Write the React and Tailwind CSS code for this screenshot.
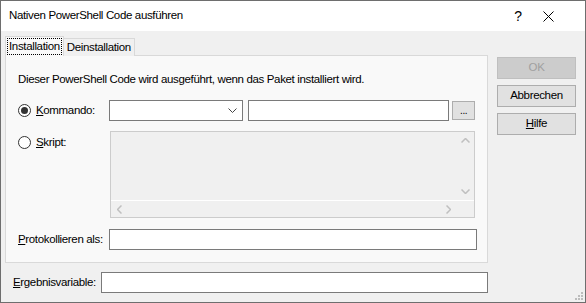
import React from "react"

const font = { fontFamily: '"Liberation Sans", Arial, sans-serif', letterSpacing: "-0.35px" }

function Radio({ checked }) {
  return (
    <span className="w-[13px] h-[13px] rounded-full border border-[#333] bg-white flex items-center justify-center shrink-0">
      {checked && <span className="w-[7px] h-[7px] rounded-full bg-[#333]" />}
    </span>
  )
}

function Field({ className = "" }) {
  return <div className={`h-[21px] bg-white border border-[#7a7a7a] shrink-0 ${className}`} />
}

function Btn({ children, disabled }) {
  return (
    <div
      className={`w-[79px] h-[22px] flex items-center justify-center border ${
        disabled ? "border-[#bfbfbf] bg-[#cccccc] text-[#a0a0a0]" : "border-[#adadad] bg-[#e1e1e1] text-black"
      }`}
    >
      {children}
    </div>
  )
}

export default function App() {
  return (
    <div className="w-[586px] h-[303px] flex flex-col border border-[#6e6e6e] text-[11.5px] text-black overflow-hidden whitespace-nowrap" style={font}>
      {/* title bar */}
      <div className="h-[30px] bg-white flex items-center shrink-0">
        <span className="ml-[8px] flex-1">Nativen PowerShell Code ausführen</span>
        <span className="w-[20px] text-center text-[14px] mr-[15px]">?</span>
        <svg width="11" height="11" viewBox="0 0 11 11" className="mr-[31px]">
          <path d="M0.5 0.5L10.5 10.5M10.5 0.5L0.5 10.5" stroke="#000" strokeWidth="1" />
        </svg>
      </div>

      {/* body */}
      <div className="flex-1 bg-[#f0f0f0] flex flex-col relative">
        <div className="flex">
          {/* tab control */}
          <div className="ml-[4px] mt-[5px] w-[483px] flex flex-col">
            <div className="flex items-end h-[20px] relative z-10">
              <div className="h-[20px] bg-[#f9f9f9] border border-b-0 border-[#d9d9d9] flex items-center px-px">
                <span className="border border-dotted border-black px-[1px] leading-[15px]">Installation</span>
              </div>
              <div className="h-[18px] bg-[#f0f0f0] border border-l-0 border-b-0 border-[#d9d9d9] flex items-center px-[3px]">
                Deinstallation
              </div>
            </div>
            <div className="-mt-px h-[208px] border border-[#d9d9d9] bg-[#f9f9f9] flex flex-col px-[12px]">
              <div className="mt-[15px] leading-[16px]">Dieser PowerShell Code wird ausgeführt, wenn das Paket installiert wird.</div>

              <div className="mt-[13px] flex items-center">
                <Radio checked />
                <span className="ml-[5px] w-[74px]"><u>K</u>ommando:</span>
                <div className="h-[21px] w-[135px] bg-white border border-[#7a7a7a] flex items-center justify-end pr-[5px]">
                  <svg width="9" height="5" viewBox="0 0 9 5">
                    <path d="M0.5 0.5L4.5 4.5L8.5 0.5" stroke="#444" fill="none" />
                  </svg>
                </div>
                <Field className="ml-[5px] w-[201px]" />
                <div className="ml-[3px] w-[23px] h-[19px] bg-[#e1e1e1] border border-[#adadad] flex items-end justify-center pb-[3px] leading-none text-[10px]">...</div>
              </div>

              <div className="mt-[10px] flex items-start">
                <div className="flex items-center mt-[3px]">
                  <Radio />
                  <span className="ml-[5px] w-[74px]"><u>S</u>kript:</span>
                </div>
                <div className="w-[368px] h-[87px] border border-[#cccccc] bg-[#f0f0f0] flex flex-col">
                  <div className="flex-1 flex">
                    <div className="flex-1" />
                    <div className="w-[17px] flex flex-col items-center justify-between py-[6px]">
                      <svg width="9" height="5" viewBox="0 0 9 5">
                        <path d="M0.5 4.5L4.5 0.5L8.5 4.5" stroke="#bfbfbf" strokeWidth="1.5" fill="none" />
                      </svg>
                      <svg width="9" height="5" viewBox="0 0 9 5">
                        <path d="M0.5 0.5L4.5 4.5L8.5 0.5" stroke="#bfbfbf" strokeWidth="1.5" fill="none" />
                      </svg>
                    </div>
                  </div>
                  <div className="h-[17px] flex items-center border-t border-white">
                    <div className="flex-1 flex items-center justify-between px-[6px]">
                      <svg width="5" height="9" viewBox="0 0 5 9">
                        <path d="M4.5 0.5L0.5 4.5L4.5 8.5" stroke="#bfbfbf" strokeWidth="1.5" fill="none" />
                      </svg>
                      <svg width="5" height="9" viewBox="0 0 5 9">
                        <path d="M0.5 0.5L4.5 4.5L0.5 8.5" stroke="#bfbfbf" strokeWidth="1.5" fill="none" />
                      </svg>
                    </div>
                    <div className="w-[17px]" />
                  </div>
                </div>
              </div>

              <div className="mt-[11px] flex items-center">
                <span className="w-[92px] text-right pr-[6px]"><u>P</u>rotokollieren als:</span>
                <Field className="w-[368px]" />
              </div>
            </div>
          </div>

          {/* buttons */}
          <div className="ml-[9px] mt-[26px] flex flex-col gap-[6px]">
            <Btn disabled>OK</Btn>
            <Btn>Abbrechen</Btn>
            <Btn><span><u>H</u>ilfe</span></Btn>
          </div>
        </div>

        <div className="mt-[9px] flex items-center">
          <span className="ml-[12px] w-[88px]"><u>E</u>rgebnisvariable:</span>
          <Field className="w-[387px]" />
        </div>

        {/* size grip */}
        <svg width="9" height="9" viewBox="0 0 9 9" className="absolute right-[2px] bottom-[2px]">
          <rect x="7" y="1" width="2" height="2" fill="#bcbcbc" />
          <rect x="4" y="4" width="2" height="2" fill="#bcbcbc" />
          <rect x="7" y="4" width="2" height="2" fill="#bcbcbc" />
          <rect x="1" y="7" width="2" height="2" fill="#bcbcbc" />
          <rect x="4" y="7" width="2" height="2" fill="#bcbcbc" />
          <rect x="7" y="7" width="2" height="2" fill="#bcbcbc" />
        </svg>
      </div>
    </div>
  )
}
